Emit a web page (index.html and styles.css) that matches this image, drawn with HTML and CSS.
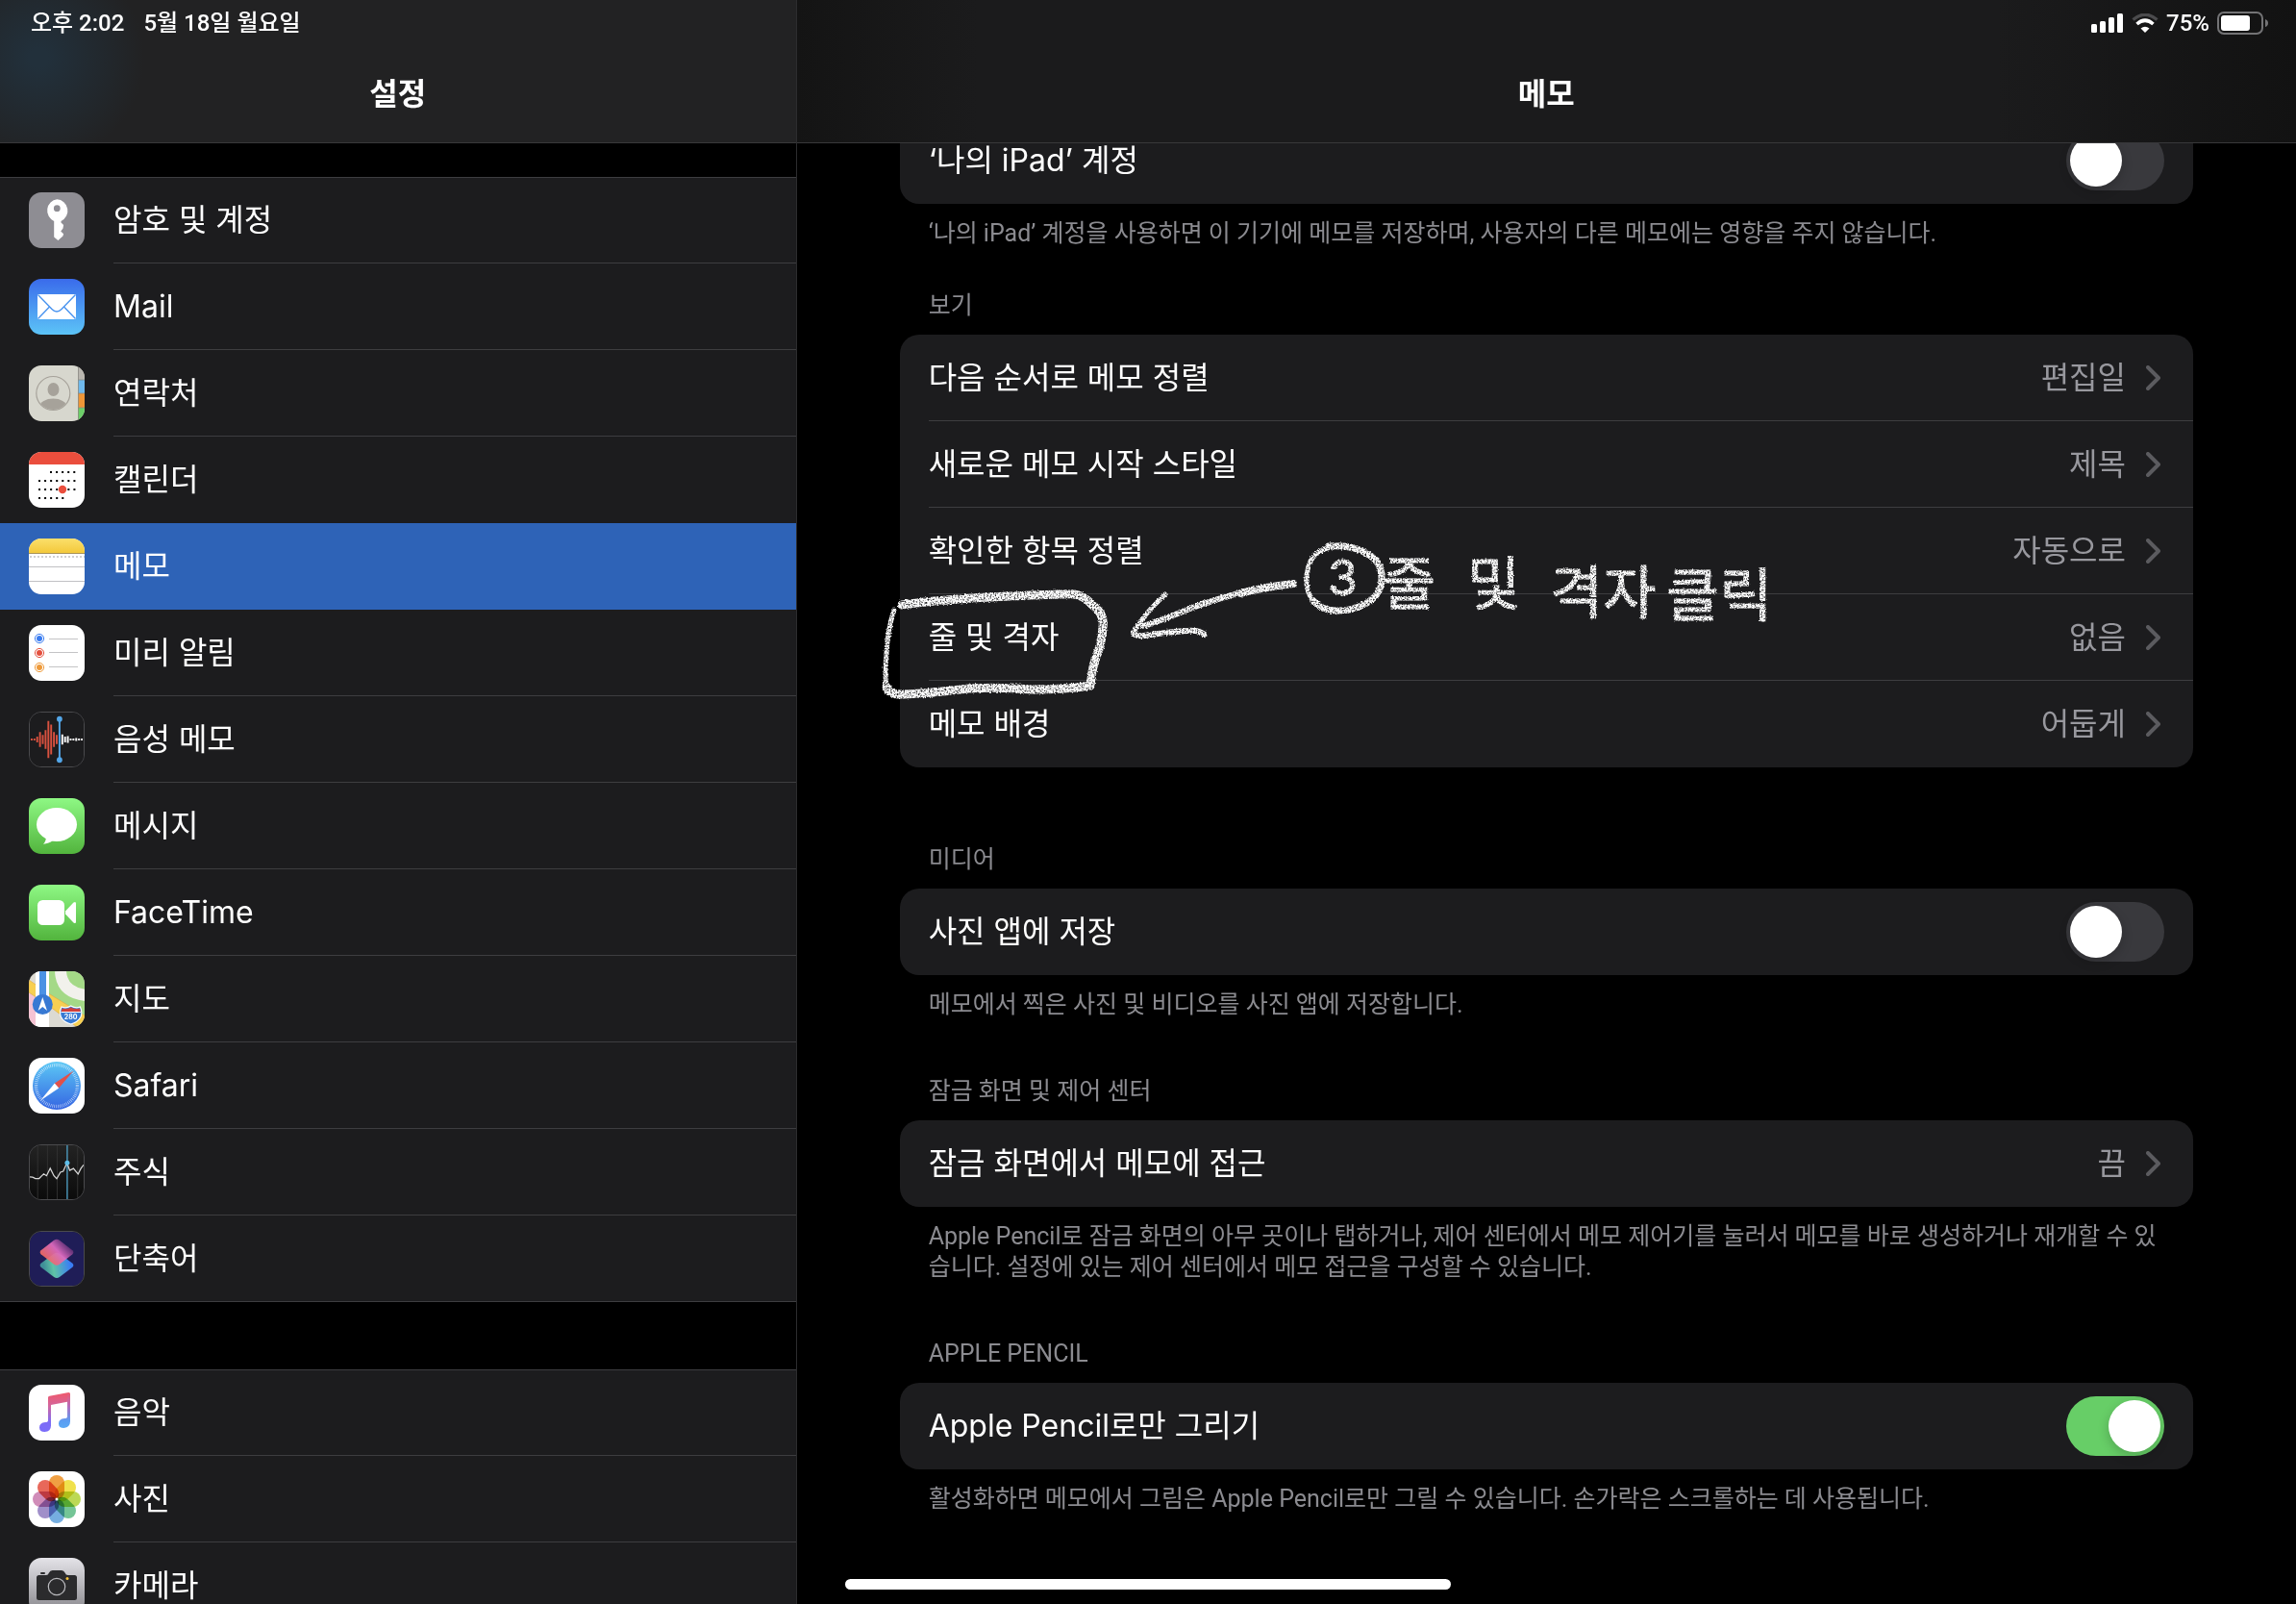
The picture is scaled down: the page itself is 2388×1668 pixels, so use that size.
FILE: index.html
```html
<!DOCTYPE html>
<html lang="ko">
<head>
    <meta charset="UTF-8">
    <meta name="viewport" content="width=device-width, initial-scale=1.0">
    <title>설정 - 메모</title>
    <link rel="stylesheet" href="styles.css">
</head>
<body>
    <nav class="sidebar">
        <header class="bar sidebar-bar">
            <div class="status">
                <span>오후 2:02</span>
                <span>5월 18일 월요일</span>
            </div>
            <h1 class="bar-title">설정</h1>
        </header>

        <ul class="app-list">
            <li>
                <a class="app" href="#passwords">
                    <svg class="app-icon" viewBox="0 0 58 58">
                        <rect width="58" height="58" fill="#8e8d93"/>
                        <path fill="#fff" fill-rule="evenodd" d="M29.3 7.3a11.5 11.8 0 0 1 4.200 22.600v1.600l2.600 2.500-.6 3.500-2.300 3 2.900 2.700-.7 2.200-5 4.700-4.200-3.600V29.900A11.500 11.800 0 0 1 29.300 7.300zm0 6a3.400 3.400 0 1 0 0 6.800 3.400 3.400 0 0 0 0-6.800z"/>
                    </svg>
                    <span class="app-name">암호 및 계정</span>
                </a>
            </li>
            <li>
                <a class="app" href="#mail">
                    <svg class="app-icon" viewBox="0 0 58 58">
                        <defs>
                            <linearGradient id="mail-bg" x2="0" y2="1">
                                <stop offset="0" stop-color="#3a6beb"/>
                                <stop offset="1" stop-color="#5cc4f7"/>
                            </linearGradient>
                        </defs>
                        <rect width="58" height="58" fill="url(#mail-bg)"/>
                        <rect x="9" y="16" width="40" height="26" rx="1" fill="#fff"/>
                        <path d="M9.500 16.500 24 31.500q5 5 10 0L48.500 16.500M9.500 41.500 21.500 29M48.500 41.500 36.500 29" fill="none" stroke="#4a94ef" stroke-width="1.400"/>
                    </svg>
                    <span class="app-name">Mail</span>
                </a>
            </li>
            <li>
                <a class="app" href="#contacts">
                    <svg class="app-icon" viewBox="0 0 58 58">
                        <defs>
                            <clipPath id="contact-clip"><circle cx="25.300" cy="29" r="17"/></clipPath>
                        </defs>
                        <rect width="58" height="58" fill="#d7d7ce"/>
                        <rect x="51" width="7" height="15" fill="#b9b6af"/>
                        <rect x="51" y="15" width="7" height="14" fill="#6fb9ec"/>
                        <rect x="51" y="29" width="7" height="15" fill="#ee9638"/>
                        <rect x="51" y="44" width="7" height="14" fill="#6ccf68"/>
                        <path d="M51.500 0v58M51 15h7M51 29h7M51 44h7" stroke="#8c8a84" stroke-width=".8"/>
                        <circle cx="25.300" cy="29" r="17.500" fill="none" stroke="#a6a29a" stroke-width="1.200"/>
                        <ellipse cx="25.500" cy="25" rx="6" ry="7" fill="#a6a29a"/>
                        <ellipse cx="25.300" cy="43" rx="14" ry="8.500" fill="#a6a29a" clip-path="url(#contact-clip)"/>
                    </svg>
                    <span class="app-name">연락처</span>
                </a>
            </li>
            <li>
                <a class="app" href="#calendar">
                    <svg class="app-icon" viewBox="0 0 58 58">
                        <rect width="58" height="58" fill="#fff"/>
                        <rect width="58" height="13" fill="#ea4e3d"/>
                        <path d="M22 21h27M10 30h39M10 39h39M10 48h27" stroke="#000" stroke-width="2" stroke-dasharray="2 4.070"/>
                        <circle cx="35" cy="39" r="4.200" fill="#ea4e3d"/>
                    </svg>
                    <span class="app-name">캘린더</span>
                </a>
            </li>
            <li>
                <a class="app selected" href="#notes" aria-current="page">
                    <svg class="app-icon" viewBox="0 0 58 58">
                        <defs>
                            <linearGradient id="notes-bg" x2="0" y2="1">
                                <stop offset="0" stop-color="#fbdf6b"/>
                                <stop offset="1" stop-color="#f3c93b"/>
                            </linearGradient>
                        </defs>
                        <rect width="58" height="58" fill="#fff"/>
                        <rect width="58" height="15" fill="url(#notes-bg)"/>
                        <path d="M0 15.500h58" stroke="#a8935a" stroke-width="1"/>
                        <path d="M1 19h57" stroke="#d0d0d2" stroke-width="2" stroke-dasharray="2 2"/>
                        <path d="M0 29.500h58M0 44.500h58" stroke="#c1c1c4" stroke-width="1"/>
                    </svg>
                    <span class="app-name">메모</span>
                </a>
            </li>
            <li>
                <a class="app" href="#reminders">
                    <svg class="app-icon" viewBox="0 0 58 58">
                        <rect width="58" height="58" fill="#fff"/>
                        <path d="M21 14.500h30M21 28.500h30M21 43.500h30" stroke="#c4c4c6"/>
                        <g fill="#3a7cf0" stroke="#3a7cf0"><circle cx="11" cy="14" r="3" stroke="none"/><circle cx="11" cy="14" r="4.600" fill="none"/></g>
                        <g fill="#e4513f" stroke="#e4513f"><circle cx="11" cy="29" r="3" stroke="none"/><circle cx="11" cy="29" r="4.600" fill="none"/></g>
                        <g fill="#ee9a3a" stroke="#ee9a3a"><circle cx="11" cy="44" r="3" stroke="none"/><circle cx="11" cy="44" r="4.600" fill="none"/></g>
                    </svg>
                    <span class="app-name">미리 알림</span>
                </a>
            </li>
            <li>
                <a class="app" href="#voice-memos">
                    <svg class="app-icon outlined" viewBox="0 0 58 58">
                        <rect width="58" height="58" fill="#1c1c1e"/>
                        <path d="M2 28v2M5 28v2M8 26v6M11 21v16M14 24v10M17 19v20M20 9v40M23 13v32M26 21v16M29 24v10" stroke="#d8513f" stroke-width="2"/>
                        <path d="M35 23.500v11M38 26v6M41 25.500v7M44 28v2M47 28v2M50 27.500v3M53 28v2M56 28v2" stroke="#fff" stroke-width="2"/>
                        <path d="M32 7v44" stroke="#53a6e8" stroke-width="2"/>
                        <circle cx="32" cy="7" r="3" fill="#53a6e8"/>
                        <circle cx="32" cy="51" r="3" fill="#53a6e8"/>
                    </svg>
                    <span class="app-name">음성 메모</span>
                </a>
            </li>
            <li>
                <a class="app" href="#messages">
                    <svg class="app-icon" viewBox="0 0 58 58">
                        <defs>
                            <linearGradient id="green-bg" x2="0" y2="1">
                                <stop offset="0" stop-color="#8ef884"/>
                                <stop offset="1" stop-color="#52b43d"/>
                            </linearGradient>
                        </defs>
                        <rect width="58" height="58" fill="url(#green-bg)"/>
                        <ellipse cx="29" cy="27.500" rx="21" ry="17.500" fill="#fff"/>
                        <path d="M18 40q0 5-3 7.700 6-.4 10-3.700z" fill="#fff"/>
                    </svg>
                    <span class="app-name">메시지</span>
                </a>
            </li>
            <li>
                <a class="app" href="#facetime">
                    <svg class="app-icon" viewBox="0 0 58 58">
                        <rect width="58" height="58" fill="url(#green-bg)"/>
                        <rect x="9" y="16" width="28" height="26" rx="5.500" fill="#fff"/>
                        <path d="M38 27.500 46.500 18.500q2.500-1.500 2.500 1v19q0 2.500-2.500 1L38 30.500z" fill="#fff"/>
                    </svg>
                    <span class="app-name">FaceTime</span>
                </a>
            </li>
            <li>
                <a class="app" href="#maps">
                    <svg class="app-icon" viewBox="0 0 58 58">
                        <rect width="58" height="58" fill="#dcdad2"/>
                        <path d="M21 0h37v48L21 24z" fill="#a4d987"/>
                        <path d="M0 22 7 27v31H0z" fill="#f5c3d3"/>
                        <path d="M0 9 22 24 58 46v12H50L21 36 0 22z" fill="#f7cf52" stroke="#e0a83c" stroke-width=".6"/>
                        <path d="M33 0q1 22 26 25" fill="none" stroke="#f2f1ec" stroke-width="12"/>
                        <path d="M7 0h14v58H7z" fill="#fff"/>
                        <path d="M11 0h7v34h-7z" fill="#4b92e4"/>
                        <circle cx="14.300" cy="34.500" r="10.500" fill="#3779d3"/>
                        <path d="M14.300 27 19 41l-4.700-4L9.600 41z" fill="#fff"/>
                        <path d="M34 37q5 2 9.700-1 5 3 9.700 1 2.500 6 .6 10.500-3 5.500-10.300 7.500-7.500-2-10.300-7.500-2-5 .6-10.500z" fill="#3779d3" stroke="#fff" stroke-width="1.200"/>
                        <path d="M34.500 38.500q5 1.500 9.200-1 4.500 2.500 9.200 1l.8 3.500H33.700z" fill="#cf3f3c"/>
                        <path d="M33.500 42.500h20.400" stroke="#fff"/>
                        <text class="shield-text" x="43.700" y="49.500">280</text>
                    </svg>
                    <span class="app-name">지도</span>
                </a>
            </li>
            <li>
                <a class="app" href="#safari">
                    <svg class="app-icon" viewBox="0 0 58 58">
                        <defs>
                            <linearGradient id="safari-bg" x2="0" y2="1">
                                <stop offset="0" stop-color="#5cc8f5"/>
                                <stop offset="1" stop-color="#3565e2"/>
                            </linearGradient>
                        </defs>
                        <rect width="58" height="58" fill="#fff"/>
                        <circle cx="29" cy="29" r="25" fill="url(#safari-bg)"/>
                        <circle cx="29" cy="29" r="21.500" fill="none" stroke="#fff" stroke-opacity=".75" stroke-width="3.400" stroke-dasharray=".6 1.276"/>
                        <path d="M46.500 13.500 31.200 31.600 26.800 26.400z" fill="#e2504a"/>
                        <path d="M12 44.500 26.800 26.400 31.200 31.600z" fill="#fff"/>
                    </svg>
                    <span class="app-name">Safari</span>
                </a>
            </li>
            <li>
                <a class="app" href="#stocks">
                    <svg class="app-icon outlined" viewBox="0 0 58 58">
                        <defs>
                            <linearGradient id="stocks-bg" x2="0" y2="1">
                                <stop offset="0" stop-color="#232323"/>
                                <stop offset="1" stop-color="#0b0b0b"/>
                            </linearGradient>
                        </defs>
                        <rect width="58" height="58" fill="url(#stocks-bg)"/>
                        <path d="M8.500 0v58M19 0v58M29.500 0v58M51.500 0v58" stroke="#323232"/>
                        <path d="M40.300 0v58" stroke="#4f9fc4" stroke-width="1.400"/>
                        <path d="M0 34l3 .3 3 1.500h4l3-3 2-2 3 2 4-8 4 8 3 3.200 4-7 3-1L40 19l3 8 4-2 5 6 3-6 3-4" fill="none" stroke="#d8d8d8" stroke-width="1.300"/>
                        <circle cx="40.300" cy="19" r="2.600" fill="#5fbfea"/>
                    </svg>
                    <span class="app-name">주식</span>
                </a>
            </li>
            <li>
                <a class="app" href="#shortcuts">
                    <svg class="app-icon outlined" viewBox="0 0 58 58">
                        <defs>
                            <linearGradient id="cut-top" x1=".2" y1=".8" x2=".9" y2=".3">
                                <stop offset="0" stop-color="#ef6a62"/>
                                <stop offset=".55" stop-color="#e06bc0"/>
                                <stop offset="1" stop-color="#5d2f74"/>
                            </linearGradient>
                            <linearGradient id="cut-bottom" x1=".1" y1=".5" x2=".9" y2=".4">
                                <stop offset="0" stop-color="#3f8f98"/>
                                <stop offset=".35" stop-color="#5fc3a6"/>
                                <stop offset="1" stop-color="#3a7df5"/>
                            </linearGradient>
                        </defs>
                        <rect width="58" height="58" fill="#1f1d57"/>
                        <path d="M12 34 26 23.500q3-2 6 0L46 34q2 2 0 4L32 48.800q-3 2-6 0L12 38q-2-2 0-4z" fill="url(#cut-bottom)"/>
                        <path d="M12 20 26 9q3-2 6 0l14 11q2 2 0 4L32 35q-3 2-6 0L12 24q-2-2 0-4z" fill="url(#cut-top)" fill-opacity=".93"/>
                    </svg>
                    <span class="app-name">단축어</span>
                </a>
            </li>
        </ul>

        <ul class="app-list">
            <li>
                <a class="app" href="#music">
                    <svg class="app-icon" viewBox="0 0 58 58">
                        <defs>
                            <linearGradient id="music-note" gradientUnits="userSpaceOnUse" x1="30" y1="8" x2="30" y2="49">
                                <stop offset="0" stop-color="#f0586a"/>
                                <stop offset=".35" stop-color="#d2669f"/>
                                <stop offset=".75" stop-color="#7d6cf5"/>
                                <stop offset="1" stop-color="#7a6cfa"/>
                            </linearGradient>
                            <linearGradient id="music-right" gradientUnits="userSpaceOnUse" x1="40" y1="8" x2="40" y2="45">
                                <stop offset="0" stop-color="#ee5a6c"/>
                                <stop offset=".4" stop-color="#b56fc0"/>
                                <stop offset=".8" stop-color="#5b9df2"/>
                                <stop offset="1" stop-color="#5aa8f4"/>
                            </linearGradient>
                        </defs>
                        <rect width="58" height="58" fill="#fff"/>
                        <path d="M20 13.500q0-1.500 1.500-1.800L40 8.200V17.800L23 21v21.500q0 6-6.500 6.500-5.500 0-5.500-4.500 0-5 6-5.500 3 0 3-2z" fill="url(#music-note)"/>
                        <path d="M40 8.200l1.500-.2Q43 8 43 9.500V38q0 6-6.500 7-5.500 0-5.500-4.500 0-5 6-5.500 3 0 3-2z" fill="url(#music-right)"/>
                    </svg>
                    <span class="app-name">음악</span>
                </a>
            </li>
            <li>
                <a class="app" href="#photos">
                    <svg class="app-icon" viewBox="0 0 58 58">
                        <rect width="58" height="58" fill="#fff"/>
                        <g class="petals">
                            <rect x="21" y="4" width="16" height="25" rx="8" fill="#f0a043"/>
                            <rect x="21" y="4" width="16" height="25" rx="8" fill="#f0e14c" transform="rotate(45 29 29)"/>
                            <rect x="21" y="4" width="16" height="25" rx="8" fill="#bcd955" transform="rotate(90 29 29)"/>
                            <rect x="21" y="4" width="16" height="25" rx="8" fill="#74c596" transform="rotate(135 29 29)"/>
                            <rect x="21" y="4" width="16" height="25" rx="8" fill="#76aee0" transform="rotate(180 29 29)"/>
                            <rect x="21" y="4" width="16" height="25" rx="8" fill="#a08fc9" transform="rotate(225 29 29)"/>
                            <rect x="21" y="4" width="16" height="25" rx="8" fill="#d08cb8" transform="rotate(270 29 29)"/>
                            <rect x="21" y="4" width="16" height="25" rx="8" fill="#e8685a" transform="rotate(315 29 29)"/>
                        </g>
                        <circle cx="29" cy="29" r="1.500" fill="#fff"/>
                    </svg>
                    <span class="app-name">사진</span>
                </a>
            </li>
            <li>
                <a class="app" href="#camera">
                    <svg class="app-icon" viewBox="0 0 58 58">
                        <defs>
                            <linearGradient id="camera-bg" x2="0" y2="1">
                                <stop offset="0" stop-color="#e4e3e8"/>
                                <stop offset="1" stop-color="#87868b"/>
                            </linearGradient>
                        </defs>
                        <rect width="58" height="58" fill="url(#camera-bg)"/>
                        <path d="M10.500 18H18q2 0 3-2.500 1-2.500 3.500-2.500H34q2.500 0 3.500 2.500 1 2.500 3 2.500h7q2.500 0 2.500 2.500v21q0 2.500-2.500 2.500h-37Q8 44 8 41.500v-21Q8 18 10.500 18z" fill="#2b2b2d"/>
                        <rect x="12" y="15" width="5" height="2" rx="1" fill="#2b2b2d"/>
                        <circle cx="29" cy="30" r="8.700" fill="none" stroke="#b9b9bd" stroke-width="1.200"/>
                        <circle cx="40" cy="21.500" r="1.500" fill="#f3c13b"/>
                    </svg>
                    <span class="app-name">카메라</span>
                </a>
            </li>
        </ul>
    </nav>

    <main class="detail">
        <header class="bar detail-bar">
            <div class="status status-right">
                <svg class="signal-icon" viewBox="0 0 34 20">
                    <g fill="#fff">
                        <rect x="0" y="11" width="6" height="9" rx="1.500"/>
                        <rect x="9" y="8" width="6" height="12" rx="1.500"/>
                        <rect x="18" y="4" width="6" height="16" rx="1.500"/>
                        <rect x="27" y="0" width="6" height="20" rx="1.500"/>
                    </g>
                </svg>
                <svg class="wifi-icon" viewBox="0 0 28 20">
                    <path d="M1.500 6.500Q14-4 26.500 6.500" fill="none" stroke="#4b4b4d" stroke-width="3.400"/>
                    <path d="M5.500 11Q14 3.500 22.500 11" fill="none" stroke="#fff" stroke-width="3.600"/>
                    <path d="M14 20 9.500 15.500Q14 11.800 18.500 15.500z" fill="#fff"/>
                </svg>
                <span class="battery-level">75%</span>
                <svg class="battery-icon" viewBox="0 0 54 24">
                    <rect x="1" y="1" width="46" height="22" rx="6" fill="none" stroke="#737375" stroke-width="2"/>
                    <rect x="4" y="4" width="30" height="16" rx="3" fill="#fff"/>
                    <path d="M50 8q3 1 3 4t-3 4z" fill="#737375"/>
                </svg>
            </div>
            <h1 class="bar-title">메모</h1>
        </header>

        <div class="groups">
            <section class="group">
                <div class="card">
                    <div class="row">
                        <label for="local-account">‘나의 iPad’ 계정</label>
                        <input class="switch" type="checkbox" id="local-account">
                    </div>
                </div>
                <p class="note">‘나의 iPad’ 계정을 사용하면 이 기기에 메모를 저장하며, 사용자의 다른 메모에는 영향을 주지 않습니다.</p>
            </section>

            <section class="group view-group">
                <h2 class="group-title">보기</h2>
                <div class="card">
                    <a class="row" href="#sort">
                        <span>다음 순서로 메모 정렬</span>
                        <span class="value">편집일</span>
                        <svg class="chevron" viewBox="0 0 16 26"><path d="M2 2l11 11L2 24"/></svg>
                    </a>
                    <a class="row" href="#new-style">
                        <span>새로운 메모 시작 스타일</span>
                        <span class="value">제목</span>
                        <svg class="chevron" viewBox="0 0 16 26"><path d="M2 2l11 11L2 24"/></svg>
                    </a>
                    <a class="row" href="#checked">
                        <span>확인한 항목 정렬</span>
                        <span class="value">자동으로</span>
                        <svg class="chevron" viewBox="0 0 16 26"><path d="M2 2l11 11L2 24"/></svg>
                    </a>
                    <a class="row" href="#lines">
                        <span>줄 및 격자</span>
                        <span class="value">없음</span>
                        <svg class="chevron" viewBox="0 0 16 26"><path d="M2 2l11 11L2 24"/></svg>
                    </a>
                    <a class="row" href="#background">
                        <span>메모 배경</span>
                        <span class="value">어둡게</span>
                        <svg class="chevron" viewBox="0 0 16 26"><path d="M2 2l11 11L2 24"/></svg>
                    </a>

                    <!-- chalk markup drawn over the list -->
                    <svg class="chalk" viewBox="900 540 1000 200">
                        <defs>
                            <filter id="chalk-grain" filterUnits="userSpaceOnUse" x="900" y="540" width="1000" height="200">
                                <feTurbulence type="fractalNoise" baseFrequency=".6" numOctaves="2" seed="4" result="noise"/>
                                <feColorMatrix in="noise" values="0 0 0 0 1  0 0 0 0 1  0 0 0 0 1  0 0 0 -3 2.400" result="grain"/>
                                <feDisplacementMap in="SourceGraphic" in2="noise" scale="3" xChannelSelector="R" yChannelSelector="G" result="rough"/>
                                <feComposite in="rough" in2="grain" operator="in"/>
                            </filter>
                        </defs>
                        <g class="chalk-lines" filter="url(#chalk-grain)">
                            <path stroke-width="9" d="M938 629Q980 623 1050 620T1117 618Q1127 619 1136 629 1149 638 1147 652 1146 670 1140 683 1136 694 1134 713 1110 717 1073 717 1040 714 1007 716 967 721 940 722 924 723 922 714"/>
                            <path stroke-width="5" d="M922 714Q920 700 922 680 923 655 930 634"/>
                            <path stroke-width="8" d="M1345 607Q1312 611 1290 617"/>
                            <path stroke-width="6" d="M1300 614Q1255 625 1225 638 1205 646 1189 651"/>
                            <path stroke-width="5" d="M1212 618Q1196 633 1188 644 1180 654 1179 658"/>
                            <path stroke-width="6" d="M1179 658Q1180 662 1190 661 1215 657 1235 656 1247 655 1253 660"/>
                            <path stroke-width="7" d="M1382 568Q1408 566 1424 577 1437 585 1437 600 1438 618 1420 628 1405 636 1388 635 1374 634 1366 625"/>
                            <path stroke-width="5" d="M1366 625Q1356 612 1360 593 1363 574 1384 569"/>
                            <g class="chalk-text">
                                <text class="chalk-number" x="1381" y="619">3</text>
                                <text x="1438" y="629">줄</text>
                                <text x="1526" y="629">및</text>
                                <text x="1612" y="638">격자</text>
                                <text x="1733" y="641">클릭</text>
                            </g>
                        </g>
                    </svg>
                </div>
            </section>

            <section class="group media-group">
                <h2 class="group-title">미디어</h2>
                <div class="card">
                    <div class="row">
                        <label for="save-photos">사진 앱에 저장</label>
                        <input class="switch" type="checkbox" id="save-photos">
                    </div>
                </div>
                <p class="note">메모에서 찍은 사진 및 비디오를 사진 앱에 저장합니다.</p>
            </section>

            <section class="group">
                <h2 class="group-title">잠금 화면 및 제어 센터</h2>
                <div class="card">
                    <a class="row" href="#lock-screen">
                        <span>잠금 화면에서 메모에 접근</span>
                        <span class="value">끔</span>
                        <svg class="chevron" viewBox="0 0 16 26"><path d="M2 2l11 11L2 24"/></svg>
                    </a>
                </div>
                <p class="note">Apple Pencil로 잠금 화면의 아무 곳이나 탭하거나, 제어 센터에서 메모 제어기를 눌러서 메모를 바로 생성하거나 재개할 수 있습니다. 설정에 있는 제어 센터에서 메모 접근을 구성할 수 있습니다.</p>
            </section>

            <section class="group">
                <h2 class="group-title">APPLE PENCIL</h2>
                <div class="card">
                    <div class="row">
                        <label for="pencil-only">Apple Pencil로만 그리기</label>
                        <input class="switch" type="checkbox" id="pencil-only" checked>
                    </div>
                </div>
                <p class="note">활성화하면 메모에서 그림은 Apple Pencil로만 그릴 수 있습니다. 손가락은 스크롤하는 데 사용됩니다.</p>
            </section>
        </div>
    </main>

    <div class="home-indicator"></div>
</body>
</html>
```
FILE: styles.css
```css
* {
    box-sizing: border-box;
}
body {
    margin: 0;
    height: 100vh;
    display: flex;
    overflow: hidden;
    background: #000;
    color: #fff;
    font-family: Inter, 'Noto Sans CJK KR', sans-serif;
    font-size: 32px;
    line-height: 48px;
}
h1, h2, p, ul {
    margin: 0;
    padding: 0;
}
ul {
    list-style: none;
}
a {
    color: inherit;
    text-decoration: none;
}
svg {
    display: block;
}

/* Top bars */
.bar {
    position: relative;
    z-index: 1;
    height: 149px;
    flex: none;
    border-bottom: 1px solid #38383a;
}
.sidebar-bar {
    background: radial-gradient(circle at 40px 60px, #22303b 0, #22303b 10px, #222223 110px);
}
.detail-bar {
    background: linear-gradient(to right, #141414, #1b1b1c 12%, #1b1b1c 80%, #121212);
}
.status {
    display: flex;
    align-items: center;
    gap: 20px;
    height: 48px;
    padding: 0 32px;
    font-family: Roboto, 'Noto Sans CJK KR', sans-serif;
    font-size: 24px;
    font-weight: 500;
    line-height: 32px;
}
.status-right {
    justify-content: flex-end;
    gap: 8px;
    padding-right: 28px;
}
.bar-title {
    font-size: 32px;
    font-weight: 600;
    line-height: 48px;
    padding-top: 26px;
    text-align: center;
}
.signal-icon {
    width: 34px;
    height: 20px;
}
.wifi-icon {
    width: 28px;
    height: 20px;
}
.battery-icon {
    width: 54px;
    height: 24px;
}

/* App list */
.sidebar {
    flex: 0 0 34.7%;
    display: flex;
    flex-direction: column;
    overflow: hidden;
    border-right: 1px solid #2c2c2e;
}
.app-list {
    flex: none;
    margin-top: 35px;
    background: #1c1c1e;
    box-shadow: inset 0 1px #3d3d40;
}
.app-list + .app-list {
    margin-top: 70px;
}
.app {
    display: flex;
    align-items: center;
    height: 90px;
    padding-left: 30px;
    gap: 30px;
}
.app-icon {
    flex: none;
    width: 58px;
    height: 58px;
    border-radius: 13px;
}
.app-icon.outlined {
    border: 1px solid #4a4a4d;
}
.app-name {
    flex: 1;
    height: 90px;
    line-height: 90px;
    border-bottom: 1px solid #3d3d40;
}
li:last-child .app {
    border-bottom: 1px solid #3d3d40;
}
li:last-child .app-name,
.selected .app-name,
li:has(+ li .selected) .app-name {
    border-bottom-color: transparent;
}
.selected {
    background: #2e63b7;
}
.shield-text {
    fill: #fff;
    font-size: 7px;
    font-weight: 700;
    text-anchor: middle;
}
.petals rect {
    mix-blend-mode: multiply;
}

/* Detail pane */
.detail {
    flex: 1;
    min-width: 0;
    overflow: hidden;
}
.groups {
    margin-top: -27px;
    padding: 0 107px;
}
.group + .group {
    margin-top: 58px;
}
.group + .view-group {
    margin-top: 43px;
}
.group + .media-group {
    margin-top: 80px;
}
.group-title,
.note {
    padding: 0 30px;
    color: #8b8b90;
    font-family: Roboto, 'Noto Sans CJK KR', sans-serif;
    font-size: 25px;
    font-weight: 400;
    line-height: 32px;
}
.group-title {
    padding-bottom: 14px;
}
.note {
    padding-top: 15px;
    word-break: break-all;
}
.card {
    position: relative;
    background: #1c1c1e;
    border-radius: 20px;
}
.row {
    position: relative;
    display: flex;
    align-items: center;
    height: 90px;
    padding: 0 30px;
}
.row + .row::before {
    content: '';
    position: absolute;
    top: -1px;
    left: 30px;
    right: 0;
    height: 1px;
    background: #3d3d40;
}
.value {
    margin-left: auto;
    color: #98989e;
}
.chevron {
    width: 16px;
    height: 26px;
    margin: 0 3px 0 21px;
    fill: none;
    stroke: #5b5b5f;
    stroke-width: 4;
    stroke-linecap: round;
    stroke-linejoin: round;
}
.switch {
    appearance: none;
    width: 102px;
    height: 62px;
    margin: 0 0 0 auto;
    padding: 4px;
    border-radius: 31px;
    background: #39393d;
}
.switch::before {
    content: '';
    display: block;
    width: 54px;
    height: 54px;
    border-radius: 50%;
    background: #fff;
    box-shadow: 0 4px 12px rgba(0, 0, 0, 0.2);
}
.switch:checked {
    background: #67ce67;
}
.switch:checked::before {
    margin-left: auto;
}

/* Chalk markup */
.chalk {
    position: absolute;
    top: 192px;
    left: -36px;
    width: 1000px;
    height: 200px;
    pointer-events: none;
}
.chalk-lines {
    fill: none;
    stroke: #fff;
    stroke-linecap: round;
    stroke-linejoin: round;
}
.chalk-text {
    fill: #fff;
    stroke-width: 1;
    font-size: 60px;
}
.chalk-number {
    font-size: 50px;
}

.home-indicator {
    position: fixed;
    bottom: 15px;
    left: 50%;
    width: 630px;
    height: 11px;
    margin-left: -315px;
    border-radius: 6px;
    background: #fff;
}
```
